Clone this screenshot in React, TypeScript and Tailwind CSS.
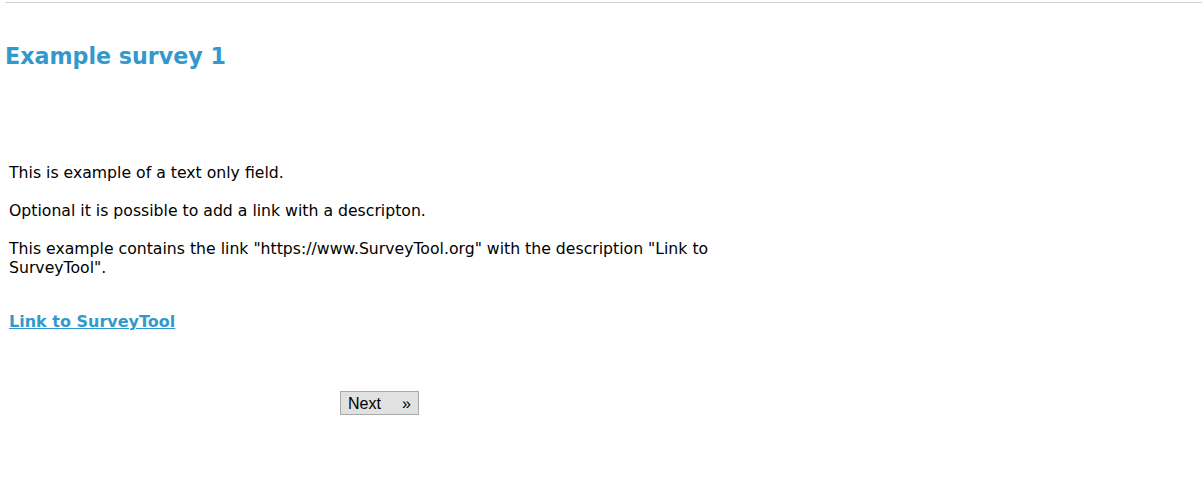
export default function App() {
  return (
    <div className="min-h-[482px] bg-white text-black" style={{ fontFamily: '"DejaVu Sans", Verdana, sans-serif' }}>
      <div className="pt-[2px] pl-[5px]">
        <div className="h-[1px] bg-[#d3d3d3]" />
      </div>

      <h1 className="pl-[5px] pt-[40px] text-[22.2px] font-bold leading-[26px] text-[#3399cc]">Example survey 1</h1>

      <div className="pl-[9px] pt-[94px] w-[750px] text-[15.7px] leading-[19px]">
        <p>This is example of a text only field.</p>
        <p className="mt-[19px]">Optional it is possible to add a link with a descripton.</p>
        <p className="mt-[19px]">
          This example contains the link "https://www.SurveyTool.org" with the description "Link to SurveyTool".
        </p>
        <p className="mt-[35px]">
          <a href="#" className="text-[16px] font-bold text-[#3399cc] underline">Link to SurveyTool</a>
        </p>

        <div className="mt-[60px] flex justify-center">
          <button
            className="h-[24px] w-[79px] border border-[#a9a9a9] bg-[#e1e1e1] text-[16px] text-black flex items-center justify-between px-[7px]"
            style={{ fontFamily: '"Liberation Sans", Arial, sans-serif' }}
          >
            <span>Next</span>
            <span>»</span>
          </button>
        </div>
      </div>
    </div>
  );
}
